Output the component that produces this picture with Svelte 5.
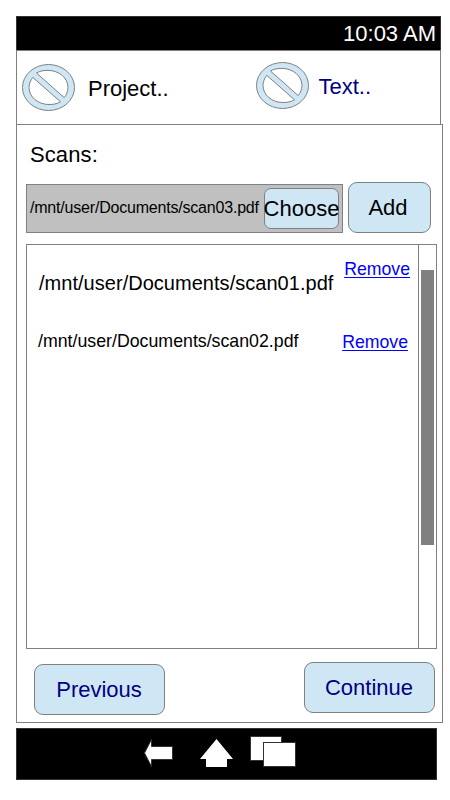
<script>
  const scans = [
    { path: '/mnt/user/Documents/scan01.pdf', kind: 'large' },
    { path: '/mnt/user/Documents/scan02.pdf', kind: 'small' }
  ];
  const chosen = '/mnt/user/Documents/scan03.pdf';
</script>

{#snippet placeholderIcon()}
  <svg class="icon" width="54" height="48" viewBox="0 0 54 48">
    <g fill="#cfe7f5" stroke="#808080" stroke-width="1">
      <ellipse cx="26.5" cy="23.5" rx="26" ry="23" />
      <g fill="#fff">
        <path d="M14.5 9 C18 6.8 22 6.4 26 6.4 C37 6.4 46 14 46 23.5 C46 27 44.4 31 42.2 33.6 Z" />
        <path d="M38.5 37.8 C35 40 31 40.5 27 40.5 C16 40.5 7 33 7 23.5 C7 20 8.6 16 10.8 13.4 Z" />
      </g>
    </g>
  </svg>
{/snippet}

<div class="phone">
  <div class="status"><span>10:03 AM</span></div>
  <header>
    <div class="tab project">{@render placeholderIcon()}<span>Project..</span></div>
    <div class="tab text">{@render placeholderIcon()}<span>Text..</span></div>
  </header>
  <main>
    <h1>Scans:</h1>
    <div class="picker">
      <div class="field">
        <span class="value">{chosen}</span>
        <button class="choose">Choose</button>
      </div>
      <button class="add">Add</button>
    </div>
    <div class="list">
      <div class="rows">
        {#each scans as scan}
          <div class="row {scan.kind}">
            <span class="path">{scan.path}</span>
            <span class="remove">Remove</span>
          </div>
        {/each}
      </div>
      <div class="scrollbar"><div class="thumb"></div></div>
    </div>
    <footer>
      <button class="previous">Previous</button>
      <button class="continue">Continue</button>
    </footer>
  </main>
  <nav>
    <svg width="30" height="30" viewBox="0 0 30 30">
      <path d="M.5 15 L7.5 1.5 V8.5 H28.5 V21.5 H7.5 V28.5 Z" fill="#fff" stroke="#333" />
    </svg>
    <svg class="home" width="34" height="30" viewBox="0 0 34 30">
      <path d="M16.5 1 L33 21 H27 V29 H6 V21 H0 Z" fill="#fff" />
    </svg>
    <svg class="windows" width="47" height="32" viewBox="0 0 47 32">
      <g fill="#fff" stroke="#333">
        <rect x=".5" y=".5" width="31" height="24" />
        <rect x="13.5" y="6.5" width="32" height="24" />
      </g>
    </svg>
  </nav>
</div>

<style>
  :global(body) { background: #fff; }
  .phone, .phone * { box-sizing: border-box; }
  .phone {
    width: 450px;
    height: 800px;
    padding: 16px 0 0 16px;
    font: 22px/24px "Liberation Sans", Arial, sans-serif;
    color: #000;
    white-space: nowrap;
    overflow: hidden;
  }
  svg { display: block; flex: none; }
  .status {
    width: 425px;
    height: 34px;
    background: #000;
    border: 1px solid #333;
    border-bottom: 0;
    color: #fff;
    text-align: right;
    padding: 5px 4px 0 0;
  }
  header {
    width: 425px;
    height: 74px;
    border: 1px solid #808080;
    border-bottom: 0;
    display: flex;
  }
  .tab { display: flex; align-items: flex-start; }
  .project { width: 234px; padding: 13px 0 0 5px; }
  .project span { margin: 13px 0 0 12px; }
  .text { padding: 11px 0 0 5px; color: #000080; }
  .text span { margin: 13px 0 0 8.5px; }
  main {
    width: 427px;
    height: 599px;
    border: 1px solid #808080;
    padding: 18px 0 0 9px;
  }
  h1 { margin: 0 0 17px 4px; font-size: 22px; font-weight: normal; letter-spacing: .1px; }
  .picker { display: flex; align-items: flex-end; height: 49px; gap: 5px; }
  .field {
    width: 317px;
    height: 49px;
    flex: none;
    background: #c0c0c0;
    border: 1px solid #808080;
    display: flex;
    padding: 3px 0 0 3px;
  }
  .value { width: 234px; flex: none; font-size: 16px; letter-spacing: -.2px; margin-top: 8px; }
  button {
    font: inherit;
    color: inherit;
    background: #cfe7f5;
    border: 1px solid #808080;
    border-radius: 9px;
    padding: 1px 1px 0 0;
    flex: none;
  }
  .choose { width: 75px; height: 41px; display: flex; justify-content: center; padding: 8px 0 0; border-radius: 7px; }
  .add { width: 83px; height: 51px; padding: 1px 3px 0 0; }
  .list { margin-top: 11px; width: 411px; height: 405px; border: 1px solid #808080; display: flex; }
  .rows { width: 391px; padding-top: 12px; }
  .row { display: flex; justify-content: space-between; height: 73px; }
  .large { font-size: 20px; letter-spacing: .03px; padding: 0 8px 0 12px; }
  .small { font-size: 17.75px; padding: 0 10px 0 11px; }
  .large .path { margin-top: 14px; }
  .small .path { margin-top: -1px; }
  .remove {
    color: #0000ff;
    font-size: 17.7px;
    letter-spacing: 0;
    text-decoration: underline;
    text-decoration-thickness: 1px;
    text-underline-offset: 2px;
    text-decoration-skip-ink: none;
  }
  .scrollbar { width: 18px; border-left: 1px solid #808080; padding: 25px 0 0 2px; }
  .thumb { width: 13px; height: 275px; background: #808080; }
  footer { display: flex; width: 409px; padding: 13px 0 0 8px; justify-content: space-between; }
  footer button { width: 131px; height: 51px; color: #000080; }
  .previous { margin-top: 2px; }
  nav {
    margin-top: 5px;
    width: 421px;
    height: 52px;
    background: #000;
    border: 1px solid #333;
    display: flex;
    align-items: flex-start;
    padding: 9px 0 0 127px;
  }
  .home { margin-left: 26px; }
  .windows { margin: -2px 0 0 16px; }
</style>
